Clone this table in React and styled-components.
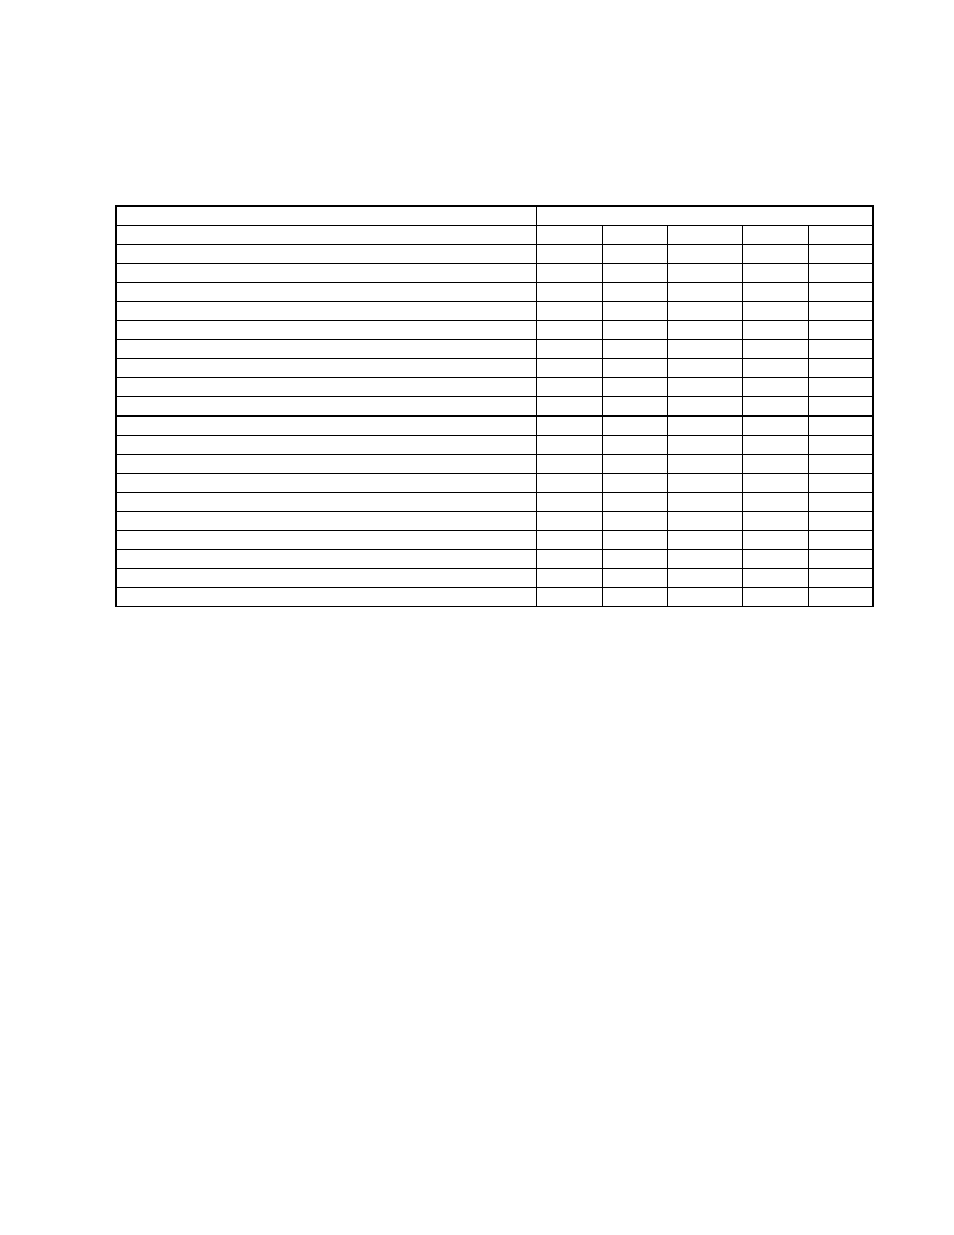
import React from "react";
import styled, { createGlobalStyle } from "styled-components";

const Global = createGlobalStyle`
  html, body { margin: 0; padding: 0; background: #fff; }
  body { font-family: "Liberation Serif", serif; }
`;

const Page = styled.div`
  width: 954px;
  min-height: 1235px;
  background: #fff;
  padding: 205px 0 0 115px;
  box-sizing: border-box;
`;

const Grid = styled.div`
  display: grid;
  grid-template-columns: 420px 66px 65px 75px 66px 65px;
  border-left: 2px solid #000;
  border-top: 2px solid #000;
  width: max-content;
`;

const Cell = styled.div`
  box-sizing: border-box;
  height: ${(p) => (p.$thick ? 20 : 19)}px;
  border-bottom: ${(p) => (p.$thick ? 2 : 1)}px solid #000;
  border-right: ${(p) => (p.$last ? 2 : 1)}px solid #000;
  grid-column: ${(p) => (p.$span ? `span ${p.$span}` : "auto")};
`;

const BODY_ROWS = 20;
const COLS = 6;

export default function App() {
  const rows = [];
  for (let r = 0; r < BODY_ROWS; r++) {
    const thick = r === 9;
    for (let c = 0; c < COLS; c++) {
      rows.push(<Cell key={`${r}-${c}`} $thick={thick} $last={c === COLS - 1} />);
    }
  }
  return (
    <>
      <Global />
      <Page>
        <Grid>
          <Cell />
          <Cell $span={5} $last />
          {rows}
        </Grid>
      </Page>
    </>
  );
}
